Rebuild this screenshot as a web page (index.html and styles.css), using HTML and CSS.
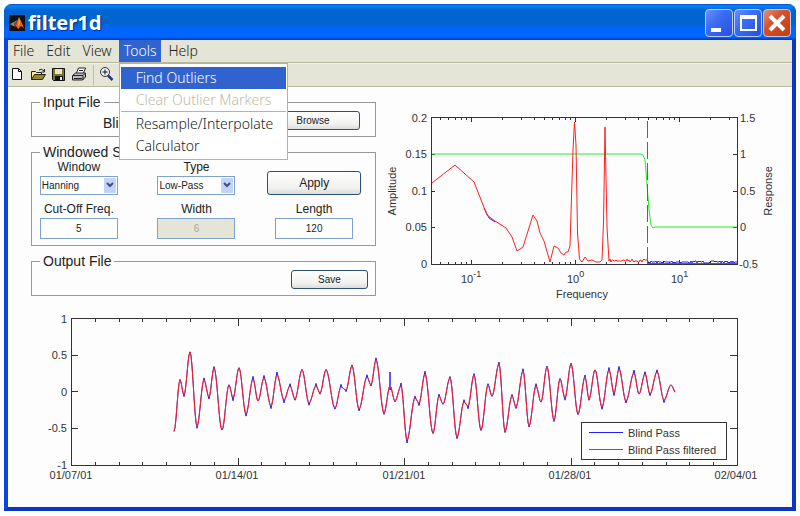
FILE: index.html
```html
<!DOCTYPE html>
<html lang="en">
<head>
    <meta charset="UTF-8">
    <meta name="viewport" content="width=device-width, initial-scale=1.0">
    <title>filter1d</title>
    <link rel="stylesheet" href="styles.css">
</head>
<body>
    <div class="window">
        <div class="titlebar">
            <svg class="logo" width="16" height="16" viewBox="0 0 16 16">
                <rect width="16" height="16" fill="#111"/>
                <path d="M1 9l4-2 3-2-2 6-2 0z" fill="#4f9bb8"/>
                <path d="M5 8l3-2 2-4 1 3-3 6-3 1z" fill="#a8321c"/>
                <path d="M10 2l2 4 3 7-3-2-3 3-2-3z" fill="#e8641e"/>
                <path d="M10 3l1 5-2 4z" fill="#f9b04a"/>
            </svg>
            <h1>filter1d</h1>
            <div class="winbtns">
                <button type="button" class="winbtn" aria-label="Minimize">
                    <svg width="24" height="24" viewBox="0 0 24 24"><rect x="4" y="17" width="10" height="4" fill="#fff"/></svg>
                </button>
                <button type="button" class="winbtn" aria-label="Maximize">
                    <svg width="24" height="24" viewBox="0 0 24 24"><path d="M4 4h17v16H4zM6 8v10h13V8z" fill="#fff" fill-rule="evenodd"/></svg>
                </button>
                <button type="button" class="winbtn close" aria-label="Close">
                    <svg width="24" height="24" viewBox="0 0 24 24"><path d="M5 5l14 14M19 5L5 19" stroke="#fff" stroke-width="4"/></svg>
                </button>
            </div>
        </div>

        <div class="menubar">
            <button type="button">File</button>
            <button type="button">Edit</button>
            <button type="button">View</button>
            <div class="menu">
                <button type="button" class="open">Tools</button>
                <div class="dropdown">
                    <button type="button" class="active">Find Outliers</button>
                    <button type="button" disabled>Clear Outlier Markers</button>
                    <hr>
                    <button type="button">Resample/Interpolate</button>
                    <button type="button">Calculator</button>
                </div>
            </div>
            <button type="button">Help</button>
        </div>

        <div class="toolbar">
            <button type="button" aria-label="New">
                <svg width="16" height="16" viewBox="0 0 16 16"><path d="M3.500 1.500h6l3 3v8h-9z" fill="#fff" stroke="#111"/><path d="M9.500 1.500v3h3" fill="none" stroke="#111"/></svg>
            </button>
            <button type="button" aria-label="Open">
                <svg width="16" height="16" viewBox="0 0 16 16"><path d="M1.500 12.500v-8h4l1 1h5v3" fill="#ffe88c" stroke="#222"/><path d="M1.500 12.500l3-5h11l-3 5z" fill="#9a8a1e" stroke="#222"/><path d="M9 3q3-2 5 1M14.500 2v3h-3" fill="none" stroke="#222"/></svg>
            </button>
            <button type="button" aria-label="Save">
                <svg width="16" height="16" viewBox="0 0 16 16"><path d="M1.500 1.500h12v12H2.500l-1-1z" fill="#7a7a1c" stroke="#111"/><rect x="4" y="2" width="7" height="5" fill="#e5e5d7"/><rect x="4" y="9" width="8" height="4" fill="#111"/><rect x="9" y="10" width="2" height="3" fill="#eee"/></svg>
            </button>
            <button type="button" aria-label="Print">
                <svg width="16" height="16" viewBox="0 0 16 16"><path d="M4.500 6l2-5h7l-2 5" fill="#fff" stroke="#222"/><path d="M7 3.500h4" stroke="#222"/><path d="M0.500 8.500l3-2.500h10v4l-3 3h-10z" fill="#bbb" stroke="#222"/><path d="M1 8.500h10l2-2M11 9v4M2 11.500h8" fill="none" stroke="#222"/><path d="M6 10.500h3" stroke="#d8c820"/></svg>
            </button>
            <span class="sep"></span>
            <button type="button" aria-label="Zoom in">
                <svg width="16" height="16" viewBox="0 0 16 16"><circle cx="6" cy="5" r="4.500" fill="#e8f0f8" stroke="#333"/><path d="M3.500 5h5M6 2.500v5" stroke="#111"/><path d="M9 8.500l4.500 4.500" stroke="#1a3a8c" stroke-width="2.500"/></svg>
            </button>
        </div>

        <div class="content">
            <form class="panels" onsubmit="return false">
                <fieldset class="input-file">
                    <legend>Input File</legend>
                    <span class="filename">Blind Pass</span>
                    <button type="button" class="btn">Browse</button>
                </fieldset>

                <fieldset class="filter">
                    <legend>Windowed Sinc Filter</legend>
                    <div class="field">
                        <label for="window">Window</label>
                        <select id="window">
                            <option>Hanning</option>
                        </select>
                    </div>
                    <div class="field">
                        <label for="type">Type</label>
                        <select id="type">
                            <option>Low-Pass</option>
                        </select>
                    </div>
                    <button type="submit" class="btn apply">Apply</button>
                    <div class="field">
                        <label for="cutoff">Cut-Off Freq.</label>
                        <input type="text" id="cutoff" value="5">
                    </div>
                    <div class="field">
                        <label for="width">Width</label>
                        <input type="text" id="width" value="6" disabled>
                    </div>
                    <div class="field">
                        <label for="length">Length</label>
                        <input type="text" id="length" value="120">
                    </div>
                </fieldset>

                <fieldset class="output-file">
                    <legend>Output File</legend>
                    <button type="button" class="btn">Save</button>
                </fieldset>
            </form>

            <svg class="chart" id="spectrum" viewBox="384 87 408 218">
                <g id="spectrum-ticks" class="axis"></g>
                <path d="M647 263.500H737" class="red"/>
                <path id="spectrum-blue" class="blue"/>
                <path class="green" d="M432 154H641L643 155L645 160L647 184L649 210L651 225L653 228L655 227H737"/>
                <path id="spectrum-red" class="red"/>
                <path class="cutoff" d="M647.500 121V264"/>
                <rect class="axis" x="431.500" y="117.500" width="306" height="147"/>
                <g class="end">
                    <text x="427" y="122">0.2</text>
                    <text x="427" y="158">0.15</text>
                    <text x="427" y="195">0.1</text>
                    <text x="427" y="231">0.05</text>
                    <text x="427" y="268">0</text>
                </g>
                <g>
                    <text x="740" y="122">1.5</text>
                    <text x="740" y="158">1</text>
                    <text x="740" y="195">0.5</text>
                    <text x="740" y="231">0</text>
                    <text x="739" y="268">-0.5</text>
                </g>
                <text x="461" y="283">10<tspan class="sup" dy="-6">-1</tspan></text>
                <text x="567" y="283">10<tspan class="sup" dy="-6">0</tspan></text>
                <text x="671" y="283">10<tspan class="sup" dy="-6">1</tspan></text>
                <text x="582" y="298" class="middle">Frequency</text>
                <text class="middle" transform="translate(396 191) rotate(-90)">Amplitude</text>
                <text class="middle" transform="translate(772 191) rotate(-90)">Response</text>
            </svg>

            <svg class="chart wide" id="series" viewBox="8 305 784 190">
                <g id="series-ticks" class="axis"></g>
                <rect class="axis" x="71.500" y="318.500" width="666" height="147"/>
                <path id="series-blue" class="blue"/>
                <path id="series-red" class="red"/>
                <g class="end">
                    <text x="67" y="323">1</text>
                    <text x="67" y="359">0.5</text>
                    <text x="67" y="396">0</text>
                    <text x="67" y="432">-0.5</text>
                    <text x="67" y="469">-1</text>
                </g>
                <g class="middle">
                    <text x="71" y="479">01/07/01</text>
                    <text x="237" y="479">01/14/01</text>
                    <text x="404" y="479">01/21/01</text>
                    <text x="570" y="479">01/28/01</text>
                    <text x="736" y="479">02/04/01</text>
                </g>
                <rect class="key" x="581.500" y="422.500" width="145" height="37"/>
                <path class="blue" d="M589 432.500H623"/>
                <path class="red" d="M589 449.500H623"/>
                <text x="628" y="437">Blind Pass</text>
                <text x="628" y="454">Blind Pass filtered</text>
            </svg>
        </div>
    </div>
    <script src="charts.js"></script>
</body>
</html>
```
FILE: styles.css
```css
*{
    box-sizing: border-box;
}
body{
    margin: 4px;
    background: #fff;
    font-family: "Liberation Sans", Arial, sans-serif;
    font-size: 12px;
    color: #222;
}
button{
    font-family: inherit;
    color: inherit;
}
.window{
    border: 4px solid #0a46e0;
    border-top: 0;
    border-right-color: #0837c4;
    border-bottom-color: #0837c4;
    border-radius: 8px 8px 0 0;
    background: #fdfdfd;
}

/* title bar */
.titlebar{
    display: flex;
    align-items: center;
    height: 36px;
    margin: 0 -4px;
    padding: 2px 5px 0 5px;
    border-radius: 8px 8px 0 0;
    background: linear-gradient(#0a50d8 0, #0a84f8 2px, #0064d4 6px, #0064cc 20px, #0066ff 24px, #0066ff 33px, #0038b8 36px);
}
.titlebar h1{
    flex: 1;
    margin: 0 0 0 3px;
    font-family: "Noto Sans", sans-serif;
    font-size: 20px;
    line-height: 28px;
    color: #fff;
    text-shadow: 1px 1px 1px #00308c;
}
.winbtns{
    display: flex;
    gap: 1px;
}
.winbtn{
    width: 28px;
    height: 28px;
    padding: 0;
    border: 1px solid #b8ccf8;
    border-radius: 4px;
    background: linear-gradient(135deg, #6a90f4, #3c6cf4 40%, #2450e0);
}
.winbtn.close{
    background: linear-gradient(135deg, #e89078, #d4502c 40%, #c83c10);
}
.winbtn svg{
    display: block;
    margin: 1px;
}

/* menu bar */
.menubar{
    display: flex;
    gap: 2px;
    height: 23px;
    border-bottom: 1px solid #b8b89c;
    background: #e5e5d7;
}
.menubar button{
    height: 22px;
    padding: 0 5px;
    border: 0;
    background: none;
    font-family: "Noto Sans", sans-serif;
    font-size: 14px;
    font-weight: 300;
    line-height: 20px;
    text-align: left;
}
.menubar .open,
.menubar .active{
    background: #3163ce;
    color: #fff;
}
.menu{
    position: relative;
}
.dropdown{
    position: absolute;
    top: 23px;
    left: 0;
    z-index: 1;
    display: flex;
    flex-direction: column;
    width: 169px;
    padding: 3px 1px 2px 1px;
    border: 1px solid #b8b48c;
    background: #fff;
}
.dropdown button{
    padding: 0 0 0 15px;
    white-space: nowrap;
}
.dropdown button:disabled{
    color: #c0bca4;
}
.dropdown hr{
    width: 100%;
    margin: 0 0 1px;
    border: 0;
    border-top: 1px solid #b8b48c;
}

/* tool bar */
.toolbar{
    display: flex;
    align-items: center;
    gap: 5px;
    height: 24px;
    padding-left: 1px;
    border-top: 1px solid #f2f2e8;
    border-bottom: 1px solid #b8b89c;
    background: #e5e5d7;
}
.toolbar button{
    padding: 0;
    border: 0;
    background: none;
}
.toolbar svg{
    display: block;
}
.sep{
    width: 1px;
    height: 20px;
    background: #c0c0a8;
}

/* filter panels */
.content{
    display: grid;
    grid-template-columns: 376fr 408fr;
    padding-bottom: 12px;
}
.panels{
    padding: 7px 8px 0 23px;
}
fieldset{
    margin: 0 0 7px;
    padding: 0;
    border: 1px solid #999;
}
fieldset:last-child{
    margin-bottom: 0;
}
legend{
    margin-left: 8px;
    padding: 0 3px;
    font-size: 14px;
    line-height: 16px;
}
.input-file{
    display: flex;
    justify-content: space-between;
    align-items: center;
}
.filename{
    margin-left: 71px;
    font-size: 14px;
}
.input-file .btn{
    width: 94px;
    margin: 1px 15px 6px 0;
}
.filter{
    display: grid;
    grid-template-columns: repeat(3, 1fr);
    gap: 7px 24px;
    padding: 0 14px 6px 0;
}
.field{
    display: flex;
    flex-direction: column;
    align-items: center;
}
.field label{
    line-height: 14px;
    margin-bottom: 2px;
    white-space: nowrap;
}
select,
.field input{
    width: 78px;
    border: 1px solid #7da2ce;
    border-radius: 0;
    background: #fff;
    font-family: inherit;
    font-size: 10px;
    color: #222;
}
select{
    height: 19px;
    padding: 0 0 0 1px;
    appearance: none;
    background: url("data:image/svg+xml,%3Csvg xmlns='http://www.w3.org/2000/svg' width='12' height='15'%3E%3Crect width='12' height='15' rx='1' fill='%23c4d2fa'/%3E%3Cpath d='M3 5l3 3 3-3' fill='none' stroke='%23345484' stroke-width='2'/%3E%3C/svg%3E") no-repeat right 1px center #fff;
}
.field input{
    height: 21px;
    padding: 0;
    text-align: center;
}
.field input:disabled{
    background: #e5e5d7;
    color: #a8a894;
}
.btn{
    height: 19px;
    padding: 0;
    border: 1px solid #2c5078;
    border-radius: 3px;
    background: linear-gradient(#fff, #f2f2f0 70%, #dcdcdc);
    font-size: 10px;
}
.btn.apply{
    align-self: end;
    height: 24px;
    font-size: 12px;
}
.output-file{
    display: flex;
    justify-content: flex-end;
}
.output-file .btn{
    width: 77px;
    margin: 1px 7px 6px 0;
}

/* charts */
.chart{
    display: block;
    width: 100%;
}
.chart.wide{
    grid-column: 1 / 3;
}
.chart text{
    font-size: 11px;
    fill: #333;
}
.chart .sup{
    font-size: 9px;
}
.end{
    text-anchor: end;
}
.middle{
    text-anchor: middle;
}
.axis{
    fill: none;
    stroke: #333;
}
.key{
    fill: #fff;
    stroke: #333;
}
.red,
.blue,
.green,
.cutoff{
    fill: none;
    stroke: #ff2020;
}
.blue{
    stroke: #2020ff;
}
.green{
    stroke: #20f020;
}
.cutoff{
    stroke: #f000f0;
    stroke-dasharray: 17 4;
}
```
FILE: charts.js
```js
var seed = 7;

function rnd() {
    seed = (seed * 16807) % 2147483647;
    return seed / 2147483647;
}

function line(parent, x1, y1, x2, y2) {
    var el = document.createElementNS("http://www.w3.org/2000/svg", "path");
    el.setAttribute("d", "M" + x1 + " " + y1 + "L" + x2 + " " + y2);
    document.getElementById(parent).appendChild(el);
}

function setPath(id, pts) {
    document.getElementById(id).setAttribute("d", "M" + pts.join("L"));
}

// log ticks, 104 units per decade
for (var d = -2; d <= 1; d++) {
    for (var m = 1; m < 10; m++) {
        var x = Math.round(575 + 104 * (d + Math.log10(m))) + 0.5;
        if (x > 432 && x < 737) {
            var len = m == 1 ? 4 : 2;
            line("spectrum-ticks", x, 118, x, 118 + len);
            line("spectrum-ticks", x, 264, x, 264 - len);
        }
    }
}
[154.5, 191.5, 227.5].forEach(function (y) {
    line("spectrum-ticks", 432, y, 435, y);
    line("spectrum-ticks", 737, y, 733, y);
});

// one tick per day, a long one per week
for (var i = 1; i < 28; i++) {
    var x = Math.round(71 + i * 666 / 28) + 0.5;
    var len = i % 7 == 0 ? 7 : 3;
    line("series-ticks", x, 319, x, 319 + len);
    line("series-ticks", x, 465, x, 465 - len);
}
[355.5, 391.5, 428.5].forEach(function (y) {
    line("series-ticks", 72, y, 78, y);
    line("series-ticks", 737, y, 730, y);
});

// spectrum
var spec = [[432, 183], [455, 165], [474, 182], [487, 215], [495, 221], [506, 228], [512, 237], [517, 251], [523, 247], [528, 231], [533, 215], [537, 221], [540, 233], [544, 241], [550, 262], [554, 246], [558, 248], [561, 253], [564, 255], [566, 252], [568, 252], [570, 246], [571, 213], [573, 150], [574.5, 122], [576, 145], [577.5, 233], [579.5, 259], [582, 262], [585, 257], [588, 261], [592, 260], [596, 262], [600, 262], [602, 260], [603.5, 223], [605, 127], [607, 227], [609, 261]];
for (var x = 610; x < 648; x++) {
    spec.push([x, 259 + Math.round(rnd() * 3)]);
}
setPath("spectrum-red", spec);

var noise = [];
for (var x = 647; x <= 737; x++) {
    noise.push([x, 261 + Math.round(rnd() * 2)]);
}
document.getElementById("spectrum-blue").setAttribute("d", "M484 208L489 218L495 222M" + noise.join("L"));

// time series, crests and troughs
var wave = [[174, 431], [180, 380], [184, 395], [190, 352], [197, 426], [204, 380], [209, 397], [214, 368], [222, 430], [229, 385], [233, 398], [239, 368], [246, 414], [253, 379], [258, 401], [264, 378], [271, 406], [277, 375], [284, 400], [290, 386], [295, 399], [302, 370], [309, 403], [316, 386], [320, 393], [326, 370], [335, 408], [341, 387], [346, 390], [352, 366], [359, 409], [367, 377], [371, 385], [376, 360], [384, 413], [390, 386], [395, 401], [401, 386], [407, 440], [415, 398], [419, 403], [425, 374], [433, 433], [439, 396], [443, 404], [450, 378], [457, 437], [464, 402], [468, 406], [474, 375], [481, 430], [488, 385], [492, 396], [499, 364], [505, 431], [512, 396], [516, 407], [523, 371], [529, 426], [536, 386], [541, 402], [547, 367], [554, 420], [560, 379], [565, 398], [571, 364], [578, 414], [585, 377], [589, 399], [595, 370], [602, 407], [609, 370], [614, 393], [619, 369], [626, 401], [634, 373], [639, 394], [645, 374], [650, 394], [657, 372], [664, 400], [671, 385], [676, 393]];
var red = [];
var blue = [];
for (var i = 0; i < wave.length - 1; i++) {
    var a = wave[i];
    var b = wave[i + 1];
    for (var x = a[0]; x < b[0]; x++) {
        var t = (1 - Math.cos(Math.PI * (x - a[0]) / (b[0] - a[0]))) / 2;
        var y = a[1] + (b[1] - a[1]) * t;
        red.push([x, y.toFixed(1)]);
        // the raw record only strays from the filtered one near the turns
        if (x == a[0]) {
            y += (a[1] < b[1] ? -1 : 1) * rnd() * 3;
        }
        blue.push([x, y.toFixed(1)]);
        if (x == 390) {
            blue.push([390, 372], [390, 390]);
        }
    }
}
setPath("series-blue", blue);
setPath("series-red", red);
```
